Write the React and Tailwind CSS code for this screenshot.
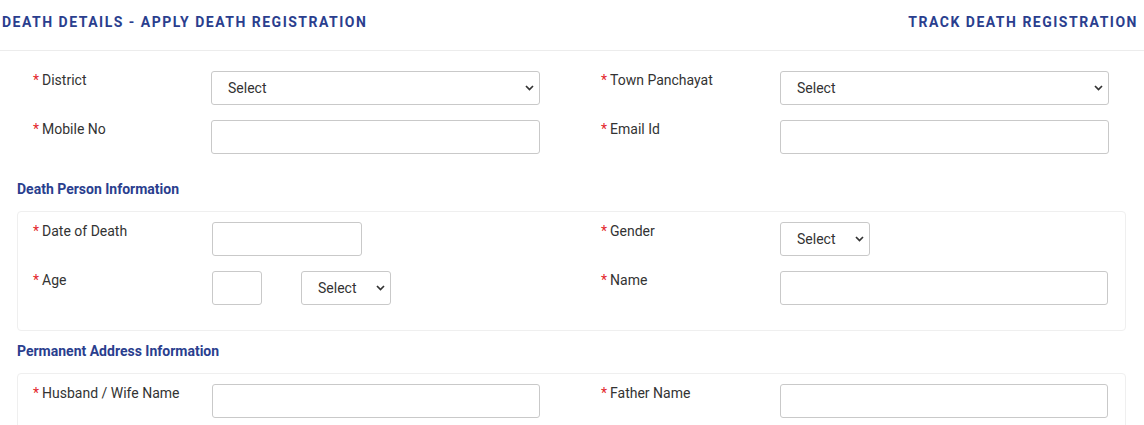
const labelCls = "text-[14px] leading-[18px] text-[#333]";

function Label({ text, width = "w-[179px]" }) {
  return (
    <div className={`${width} shrink-0 ${labelCls}`}>
      <span className="text-[#e3262b] mr-[3px]">*</span>
      {text}
    </div>
  );
}

function Chevron() {
  return (
    <svg
      className="pointer-events-none absolute right-[6px] top-1/2 -translate-y-1/2"
      width="9"
      height="6"
      viewBox="0 0 9 6"
      fill="none"
    >
      <path d="M1 1l3.5 3.5L8 1" stroke="#333" strokeWidth="1.7" />
    </svg>
  );
}

function Select({ width }) {
  return (
    <div className={`relative shrink-0 ${width} h-[34px]`}>
      <select className="appearance-none w-full h-full border border-[#c9c9c9] rounded-[3px] bg-white pl-4 pr-6 text-[14px] text-[#333] outline-none">
        <option>Select</option>
      </select>
      <Chevron />
    </div>
  );
}

function Input({ width }) {
  return (
    <input
      type="text"
      className={`${width} shrink-0 h-[34px] border border-[#c9c9c9] rounded-[3px] bg-white outline-none`}
    />
  );
}

function Half({ children }) {
  return <div className="w-[568px] shrink-0 flex items-start">{children}</div>;
}

function Row({ children }) {
  return <div className="flex mb-[15px]">{children}</div>;
}

function SectionTitle({ children }) {
  return (
    <h3 className="pl-[17px] mt-[10px] mb-[12px] text-[14px] leading-5 font-bold text-[#2a3e8e]">
      {children}
    </h3>
  );
}

function Box({ children }) {
  return (
    <div className="ml-[17px] w-[1109px] border border-[#efefef] rounded-[4px] pl-[15px] pt-[10px] pb-[10px]">
      {children}
    </div>
  );
}

export default function App() {
  return (
    <div
      className="w-[1144px] h-[425px] overflow-hidden bg-white flex flex-col"
      style={{ fontFamily: "Roboto, 'Noto Sans', sans-serif" }}
    >
      <div className="flex justify-between items-start h-[51px] shrink-0 pt-[12px] pl-[2px] pr-[6px] border-b border-[#ececec]">
        <h2 className="text-[14px] leading-5 font-bold tracking-[1.5px] text-[#2a3e8e]">
          DEATH DETAILS - APPLY DEATH REGISTRATION
        </h2>
        <a className="text-[14px] leading-5 font-bold tracking-[1.5px] text-[#2a3e8e]">
          TRACK DEATH REGISTRATION
        </a>
      </div>

      <div className="pt-[20px] pl-[33px] shrink-0">
        <Row>
          <Half>
            <Label text="District" width="w-[178px]" />
            <Select width="w-[329px]" />
          </Half>
          <Half>
            <Label text="Town Panchayat" />
            <Select width="w-[329px]" />
          </Half>
        </Row>
        <Row>
          <Half>
            <Label text="Mobile No" width="w-[178px]" />
            <Input width="w-[329px]" />
          </Half>
          <Half>
            <Label text="Email Id" />
            <Input width="w-[329px]" />
          </Half>
        </Row>
      </div>

      <SectionTitle>Death Person Information</SectionTitle>
      <Box>
        <Row>
          <Half>
            <Label text="Date of Death" />
            <Input width="w-[150px]" />
          </Half>
          <Half>
            <Label text="Gender" />
            <Select width="w-[90px]" />
          </Half>
        </Row>
        <Row>
          <Half>
            <Label text="Age" />
            <div className="flex gap-[39px]">
              <Input width="w-[50px]" />
              <Select width="w-[90px]" />
            </div>
          </Half>
          <Half>
            <Label text="Name" />
            <Input width="w-[328px]" />
          </Half>
        </Row>
      </Box>

      <SectionTitle>Permanent Address Information</SectionTitle>
      <Box>
        <Row>
          <Half>
            <Label text="Husband / Wife Name" />
            <Input width="w-[328px]" />
          </Half>
          <Half>
            <Label text="Father Name" />
            <Input width="w-[328px]" />
          </Half>
        </Row>
      </Box>
    </div>
  );
}
